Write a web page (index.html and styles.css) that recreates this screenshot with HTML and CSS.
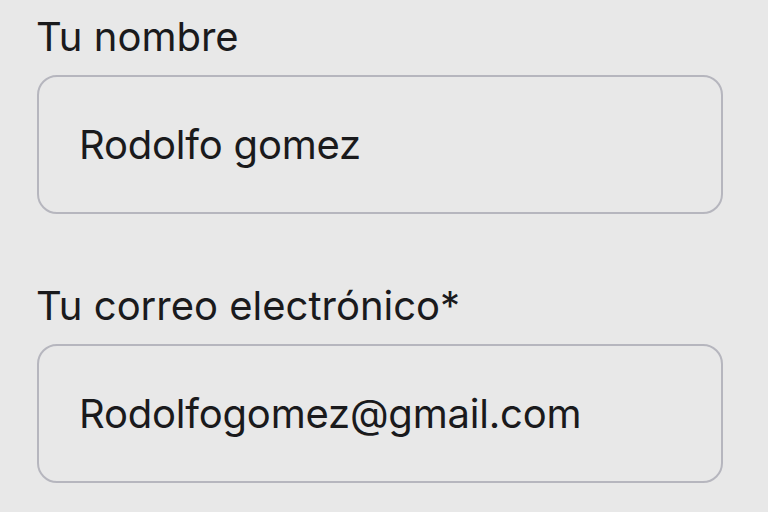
FILE: index.html
```html
<!DOCTYPE html>
<html lang="es">
<head>
<meta charset="utf-8">
<link rel="stylesheet" href="styles.css">
</head>
<body>
<form class="form">
  <div class="field">
    <label class="label">Tu nombre</label>
    <div class="input">Rodolfo gomez</div>
  </div>
  <div class="field field-second">
    <label class="label">Tu correo electrónico*</label>
    <div class="input">Rodolfogomez@gmail.com</div>
  </div>
</form>
</body>
</html>
```
FILE: styles.css
```css
html, body {
  margin: 0;
  padding: 0;
  background: #e8e8e8;
}
body {
  font-family: Inter, "Noto Sans", sans-serif;
  color: #1a1a1c;
  overflow: hidden;
}
.form {
  padding: 13px 0 0 37px;
  display: flex;
  flex-direction: column;
}
.field {
  display: flex;
  flex-direction: column;
}
.field-second {
  margin-top: 68px;
}
.label {
  font-size: 40px;
  line-height: 48px;
  margin-bottom: 14px;
  margin-left: -1px;
}
.input {
  box-sizing: border-box;
  width: 686px;
  height: 139px;
  border: 2px solid #b6b6be;
  border-radius: 20px;
  display: flex;
  align-items: center;
  padding-left: 40px;
  font-size: 40px;
  letter-spacing: -0.2px;
}
```
